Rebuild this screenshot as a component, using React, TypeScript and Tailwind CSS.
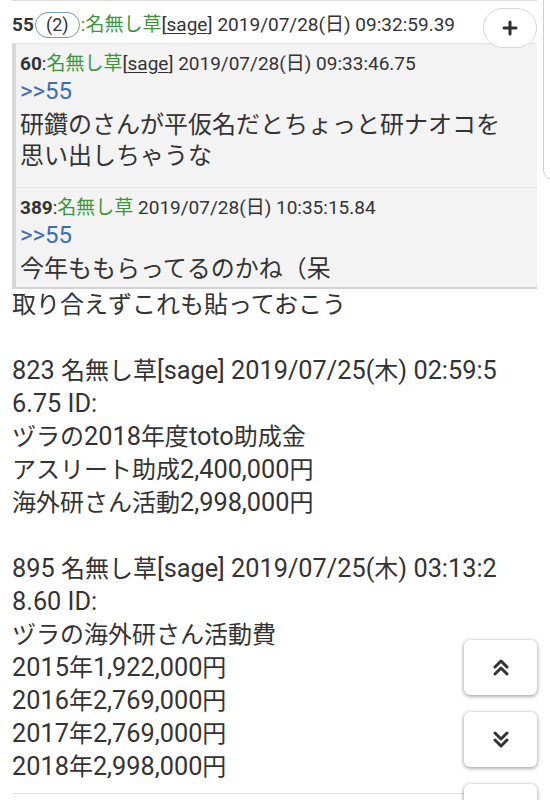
import { FC, ReactNode } from "react";

const font = "font-['Roboto','Noto_Sans_CJK_JP',sans-serif]";

// the latin runs in the reference read a little wider than the kana around them
const Line: FC<{ text: string }> = ({ text }) => (
  <div className="h-[33px]">
    {text.split(/([\x20-\x7E]+)/).map((part, i) =>
      /^[\x20-\x7E]+$/.test(part) ? (
        <span key={i} className="text-[25.3px] leading-none">
          {part}
        </span>
      ) : (
        <span key={i}>{part}</span>
      )
    )}
  </div>
);

const Name: FC<{ sage?: boolean }> = ({ sage }) => (
  <>
    <span className="text-[#3b963b]">名無し草</span>
    {sage && (
      <span>
        [<span className="underline underline-offset-2">sage</span>]
      </span>
    )}
  </>
);

const Reply: FC<{ no: string; sage?: boolean; date: string; children: ReactNode; last?: boolean }> = ({
  no,
  sage,
  date,
  children,
  last,
}) => (
  <div className={`pl-1 pt-2 ${last ? "pb-[2px]" : "pb-[15px] border-b border-[#e2e2e2]"}`}>
    <div className="text-[19px] leading-[24px] whitespace-nowrap">
      <span className="font-bold">{no}</span>:
      <Name sage={sage} /> {date}
    </div>
    <div className="text-[24px] leading-[30px] text-[#3d6db3]">&gt;&gt;55</div>
    <div className="mt-1 text-[24px] leading-[31px] whitespace-nowrap">{children}</div>
  </div>
);

const Chevrons: FC<{ down?: boolean }> = ({ down }) => (
  <svg width="16" height="19" viewBox="0 0 16 19" className={down ? "rotate-180" : ""}>
    <path d="M2 9 L8 3 L14 9 M2 16 L8 10 L14 16" fill="none" stroke="#333" strokeWidth="3" strokeLinecap="round" strokeLinejoin="round" />
  </svg>
);

const lines1 = [
  "823 名無し草[sage] 2019/07/25(木) 02:59:5",
  "6.75 ID:",
  "ヅラの2018年度toto助成金",
  "アスリート助成2,400,000円",
  "海外研さん活動2,998,000円",
];

const lines2 = [
  "895 名無し草[sage] 2019/07/25(木) 03:13:2",
  "8.60 ID:",
  "ヅラの海外研さん活動費",
  "2015年1,922,000円",
  "2016年2,769,000円",
  "2017年2,769,000円",
  "2018年2,998,000円",
];

export default function App() {
  return (
    <div className={`relative w-[550px] h-[800px] overflow-hidden bg-white text-[#333] ${font}`}>
      <div className="pl-3 pr-[13px]">
        <div className="border-t border-[#dcdcdc] pt-[10px] pb-[4px]">
          <div className="flex items-center text-[19px] leading-[28px] whitespace-nowrap">
            <span className="font-bold">55</span>
            <span className="mx-[1px] inline-flex h-[26px] w-[45px] items-center justify-center rounded-full border-[1.5px] border-[#7d97bd] text-[18px]">
              (2)
            </span>
            <span className="text-[#3b963b]">:</span>
            <Name sage />
            <span className="ml-[5px]">2019/07/28(日) 09:32:59.39</span>
          </div>
        </div>

        <div className="bg-[#f3f3f3] border-l-4 border-l-[#d8d8d8] border-t border-t-[#e4e4e4] border-b-2 border-b-[#d2d2d2]">
          <Reply no="60" sage date="2019/07/28(日) 09:33:46.75">
            研鑽のさんが平仮名だとちょっと研ナオコを
            <br />
            思い出しちゃうな
          </Reply>
          <Reply no="389" date="2019/07/28(日) 10:35:15.84" last>
            今年ももらってるのかね（呆
          </Reply>
        </div>

        <div className="text-[24px] leading-[33px] whitespace-nowrap pb-[9px] border-b border-[#e2e2e2]">
          <div className="h-[33px]">取り合えずこれも貼っておこう</div>
          <div className="h-[33px]" />
          {lines1.map((l) => (
            <Line key={l} text={l} />
          ))}
          <div className="h-[33px]" />
          {lines2.map((l) => (
            <Line key={l} text={l} />
          ))}
        </div>
      </div>

      {/* side panel edge */}
      <div className="absolute left-[543px] top-[-10px] w-[40px] h-[190px] rounded-bl-[10px] border border-[#cfcfcf] bg-white" />

      {/* + button */}
      <button className="absolute left-[483px] top-[8px] w-[54px] h-[40px] rounded-full border border-[#d8d8d8] bg-white flex items-center justify-center">
        <svg width="16" height="16" viewBox="0 0 16 16">
          <path d="M8 2 V14 M2 8 H14" stroke="#2f2f2f" strokeWidth="3" strokeLinecap="round" />
        </svg>
      </button>

      {/* scroll buttons */}
      <div className="absolute left-[464px] top-[640px] flex flex-col gap-[17px]">
        <button className="w-[73px] h-[55px] rounded-[6px] bg-white shadow-[0_1px_4px_rgba(0,0,0,0.45)] flex items-center justify-center">
          <Chevrons />
        </button>
        <button className="w-[73px] h-[55px] rounded-[6px] bg-white shadow-[0_1px_4px_rgba(0,0,0,0.45)] flex items-center justify-center">
          <Chevrons down />
        </button>
        <button className="w-[73px] h-[55px] rounded-[6px] bg-white shadow-[0_1px_4px_rgba(0,0,0,0.45)]" />
      </div>
    </div>
  );
}
